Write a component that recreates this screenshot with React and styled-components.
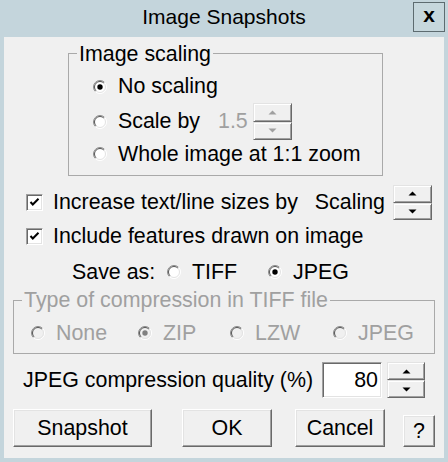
import React from "react";
import styled, { createGlobalStyle } from "styled-components";

const GlobalStyle = createGlobalStyle`
  html, body {
    margin: 0;
    padding: 0;
    background: #c4d5dc;
  }
  body {
    font-family: "Liberation Sans", Arial, sans-serif;
  }
`;

const Dialog = styled.div`
  width: 448px;
  height: 462px;
  box-sizing: border-box;
  display: flex;
  flex-direction: column;
  background: #c4d5dc;
  font-family: "Liberation Sans", Arial, sans-serif;
  font-size: 21.4px;
  color: #000;
`;

const TitleBar = styled.div`
  height: 33px;
  display: grid;
  grid-template-columns: 1fr auto 1fr;
  align-items: center;
  padding: 0 3px 0 3px;
`;

const Title = styled.div`
  grid-column: 2;
  font-size: 21px;
  line-height: 24px;
`;

const CloseButton = styled.button`
  grid-column: 3;
  justify-self: end;
  width: 32px;
  height: 30px;
  margin-top: 1px;
  padding: 0 0 4px;
  border: 1px solid #5d6b70;
  background: #c6d7dd;
  font-family: "Liberation Sans", Arial, sans-serif;
  font-weight: bold;
  font-size: 21px;
  line-height: 24px;
  color: #000;
`;

const Panel = styled.div`
  flex: 1;
  margin: 4px 4px 4px;
  background: #f0f0f0;
  display: flex;
  flex-direction: column;
`;

const Group = styled.fieldset`
  margin: ${(p) => p.$mt}px 0 0 ${(p) => p.$ml}px;
  width: ${(p) => p.$w}px;
  box-sizing: border-box;
  min-width: 0;
  border: 1px solid #a9a9a9;
  padding: ${(p) => p.$pt}px 0 ${(p) => p.$pb}px 8px;
`;

const Legend = styled.legend`
  padding: 0 2px;
  line-height: 24px;
  color: ${(p) => (p.$disabled ? "#a0a0a0" : "#000")};
`;

const OptionRow = styled.div`
  height: ${(p) => p.$h}px;
  display: grid;
  grid-template-columns: ${(p) => p.$cols || "auto"};
  align-items: center;
  margin-left: ${(p) => p.$ml || 0}px;
`;

const Option = styled.label`
  display: inline-flex;
  align-items: center;
  gap: 11px;
  white-space: nowrap;
  color: ${(p) => (p.$disabled ? "#a0a0a0" : "#000")};
`;

const GreyValue = styled.span`
  color: #a0a0a0;
`;

const Row = styled.div`
  height: ${(p) => p.$h}px;
  margin-top: ${(p) => p.$mt || 0}px;
  display: flex;
  align-items: center;
  padding: 0 ${(p) => p.$pr || 0}px 0 ${(p) => p.$pl || 0}px;
  white-space: nowrap;
`;

const GridRow = styled.div`
  height: ${(p) => p.$h}px;
  margin-top: ${(p) => p.$mt || 0}px;
  display: grid;
  grid-template-columns: ${(p) => p.$cols};
  align-items: center;
  padding-left: ${(p) => p.$pl}px;
  white-space: nowrap;
`;

const CheckLabel = styled.span`
  margin-left: 10px;
`;

const Spacer = styled.span`
  flex: 1;
`;

const CheckBox = styled.span`
  width: 17px;
  height: 17px;
  box-sizing: border-box;
  flex: none;
  background: #fff;
  border: 1px solid;
  border-color: #a0a0a0 #fff #fff #a0a0a0;
  box-shadow: inset 1px 1px #696969, inset -1px -1px #e3e3e3;
  display: inline-flex;
  align-items: center;
  justify-content: center;
`;

const Spin = styled.div`
  width: ${(p) => p.$w}px;
  height: ${(p) => p.$h}px;
  margin-left: ${(p) => p.$ml || 0}px;
  display: flex;
  flex-direction: column;
  flex: none;
`;

const SpinButton = styled.div`
  flex: 1;
  box-sizing: border-box;
  background: #f0f0f0;
  border: 1px solid;
  border-color: #e3e3e3 #696969 #696969 #e3e3e3;
  box-shadow: inset 1px 1px #fff, inset -1px -1px #a0a0a0;
  display: flex;
  align-items: center;
  justify-content: center;
`;

const NumberBox = styled.div`
  margin-left: auto;
  width: 60px;
  height: 36px;
  box-sizing: border-box;
  background: #fff;
  border: 1px solid;
  border-color: #a0a0a0 #fff #fff #a0a0a0;
  box-shadow: inset 1px 1px #696969, inset -1px -1px #e3e3e3;
  display: flex;
  align-items: center;
  justify-content: flex-end;
  padding-right: 3px;
`;

const ButtonRow = styled.div`
  margin-top: 11px;
  height: 38px;
  display: flex;
  align-items: flex-end;
  padding-left: 9px;
`;

const Button = styled.button`
  width: ${(p) => p.$w}px;
  height: ${(p) => p.$h || 38}px;
  margin-left: ${(p) => p.$ml || 0}px;
  padding: 0;
  box-sizing: border-box;
  background: #f0f0f0;
  border: 1px solid;
  border-color: #fff #696969 #696969 #fff;
  box-shadow: inset -1px -1px #a0a0a0, inset 1px 1px #e3e3e3;
  font-family: "Liberation Sans", Arial, sans-serif;
  font-size: 21.4px;
  color: #000;
`;

function Radio({ checked, disabled }) {
  return (
    <svg width="14" height="14" viewBox="0 0 14 14">
      <circle cx="7" cy="7" r="6.5" fill={disabled ? "#f0f0f0" : "#fff"} />
      <path d="M2.4 11.6 A6.5 6.5 0 0 1 11.6 2.4" fill="none" stroke="#8a8a8a" strokeWidth="1" />
      <path d="M3.1 10.9 A5.5 5.5 0 0 1 10.9 3.1" fill="none" stroke="#555" strokeWidth="1" />
      <path d="M11.6 2.4 A6.5 6.5 0 0 1 2.4 11.6" fill="none" stroke="#fff" strokeWidth="1" />
      <path d="M10.9 3.1 A5.5 5.5 0 0 1 3.1 10.9" fill="none" stroke="#e3e3e3" strokeWidth="1" />
      {checked && <circle cx="7" cy="7" r="2.7" fill={disabled ? "#808080" : "#000"} />}
    </svg>
  );
}

function Check() {
  return (
    <CheckBox>
      <svg width="13" height="13" viewBox="0 0 13 13">
        <path d="M2.5 6 L4.8 8.5 L10.5 2.8" fill="none" stroke="#000" strokeWidth="2" />
      </svg>
    </CheckBox>
  );
}

function Arrow({ up, disabled }) {
  return (
    <svg width="9" height="5" viewBox="0 0 9 5">
      <polygon
        points={up ? "0.5,4.5 4.5,0.5 8.5,4.5" : "0.5,0.5 4.5,4.5 8.5,0.5"}
        fill={disabled ? "#a0a0a0" : "#000"}
      />
    </svg>
  );
}

function Spinner({ w, h, ml, disabled }) {
  return (
    <Spin $w={w} $h={h} $ml={ml}>
      <SpinButton>
        <Arrow up disabled={disabled} />
      </SpinButton>
      <SpinButton>
        <Arrow disabled={disabled} />
      </SpinButton>
    </Spin>
  );
}

export default function App() {
  return (
    <>
      <GlobalStyle />
      <Dialog>
        <TitleBar>
          <Title>Image Snapshots</Title>
          <CloseButton type="button">x</CloseButton>
        </TitleBar>
        <Panel>
          <Group $mt={4.5} $ml={64} $w={315} $pt={4.5} $pb={7}>
            <Legend>Image scaling</Legend>
            <OptionRow $h={33} $ml={16}>
              <Option>
                <Radio checked />
                No scaling
              </Option>
            </OptionRow>
            <OptionRow $h={37} $ml={16} $cols="125px 35px 39px">
              <Option>
                <Radio />
                Scale by
              </Option>
              <GreyValue>1.5</GreyValue>
              <Spinner w={39} h={37} disabled />
            </OptionRow>
            <OptionRow $h={28} $ml={16}>
              <Option>
                <Radio />
                Whole image at 1:1 zoom
              </Option>
            </OptionRow>
          </Group>

          <Row $h={35} $mt={9} $pl={22} $pr={12}>
            <Check />
            <CheckLabel>Increase text/line sizes by</CheckLabel>
            <Spacer />
            <span>Scaling</span>
            <Spinner w={39} h={35} ml={8} />
          </Row>
          <Row $h={32} $pl={22}>
            <Check />
            <CheckLabel>Include features drawn on image</CheckLabel>
          </Row>
          <GridRow $h={32} $mt={4} $pl={68} $cols="95px 101px auto">
            <span>Save as:</span>
            <Option>
              <Radio />
              TIFF
            </Option>
            <Option>
              <Radio checked />
              JPEG
            </Option>
          </GridRow>

          <Group $mt={0} $ml={9} $w={422} $pt={7} $pb={6}>
            <Legend $disabled>Type of compression in TIFF file</Legend>
            <OptionRow $h={28} $ml={9} $cols="107px 92px 103px auto">
              <Option $disabled>
                <Radio disabled />
                None
              </Option>
              <Option $disabled>
                <Radio checked disabled />
                ZIP
              </Option>
              <Option $disabled>
                <Radio disabled />
                LZW
              </Option>
              <Option $disabled>
                <Radio disabled />
                JPEG
              </Option>
            </OptionRow>
          </Group>

          <Row $h={36} $mt={8} $pl={19} $pr={19}>
            <span>JPEG compression quality (%)</span>
            <NumberBox>80</NumberBox>
            <Spinner w={38} h={36} ml={5} />
          </Row>

          <ButtonRow>
            <Button type="button" $w={139}>Snapshot</Button>
            <Button type="button" $w={90} $ml={30}>OK</Button>
            <Button type="button" $w={90} $ml={23}>Cancel</Button>
            <Button type="button" $w={32} $h={32} $ml={18}>?</Button>
          </ButtonRow>
        </Panel>
      </Dialog>
    </>
  );
}
